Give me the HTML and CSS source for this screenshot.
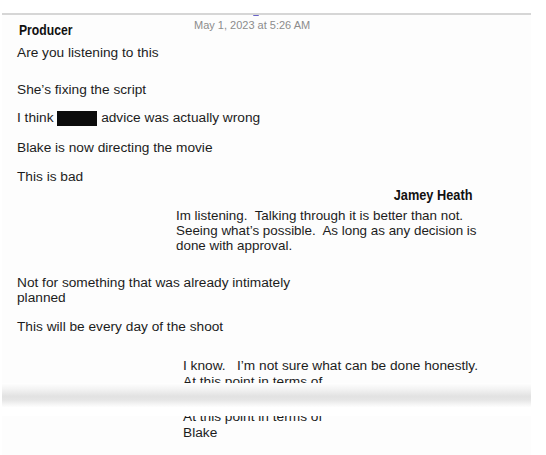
FILE: index.html
```html
<!DOCTYPE html>
<html lang="en">
<head>
    <meta charset="UTF-8">
    <title>Messages</title>
    <link rel="stylesheet" href="styles.css">
</head>
<body>
    <div class="sheet">
        <div class="sheet-top">
            <span class="marker"></span>
            <div class="thread-head">
                <span class="head-name"><span class="sender">Producer</span></span>
                <span class="stamp">May 1, 2023 at 5:26 AM</span>
            </div>
            <p class="msg first">Are you listening to this</p>
            <p class="msg wide-gap">She’s fixing the script</p>
            <p class="msg tight">I think <span class="redacted"></span> advice was actually wrong</p>
            <p class="msg">Blake is now directing the movie</p>
            <p class="msg">This is bad</p>

            <div class="reply">
                <div class="reply-name"><span class="sender">Jamey Heath</span></div>
                <p class="msg reply-text">Im listening.&nbsp; Talking through it is better than not.<br>Seeing what’s possible.&nbsp; As long as any decision is<br>done with approval.</p>
            </div>

            <p class="msg wide-gap">Not for something that was already intimately<br>planned</p>
            <p class="msg">This will be every day of the shoot</p>

            <p class="msg later">I know.&nbsp;&nbsp; I’m not sure what can be done honestly.<br>At this point in terms of</p>
        </div>

        <div class="fold"></div>

        <div class="sheet-bottom">
            <p class="msg later carried">At this point in terms of<br>Blake</p>
        </div>
    </div>
</body>
</html>
```

FILE: styles.css
```css
body {
    margin: 0;
    background-color: #ffffff;
    font-family: 'Liberation Sans', Arial, sans-serif;
    color: #1c1c1c;
}
.sheet {
    width: 529px;
    margin: 13px 0 0 2px;
}
.sheet-top {
    position: relative;
    height: 368px;
    overflow: hidden;
    border-top: 2px solid #d6d6d6;
    background-color: #fdfdfd;
    padding: 0 0 0 15px;
}
.marker {
    position: absolute;
    left: 251px;
    top: -1px;
    width: 6px;
    height: 2px;
    background-color: #6a64c8;
    border-radius: 1px;
}
.thread-head {
    display: flex;
    align-items: flex-start;
    height: 22px;
    padding-top: 6px;
}
.head-name {
    width: 175px;
    padding-left: 2px;
}
.sender {
    display: inline-block;
    font-weight: bold;
    font-size: 14.5px;
    line-height: 18px;
    color: #111111;
    transform: scaleX(0.84);
    transform-origin: left center;
}
.stamp {
    font-size: 11px;
    line-height: 12px;
    color: #8c8c8c;
    margin-top: -2px;
}
.msg {
    margin: 14px 0 0 0;
    font-size: 13.7px;
    line-height: 15px;
}
.msg.first {
    margin-top: 2px;
}
.msg.wide-gap {
    margin-top: 22px;
}
.msg.tight {
    margin-top: 13px;
}
.redacted {
    display: inline-block;
    width: 40px;
    height: 15px;
    background-color: #0c0c0c;
    vertical-align: -4px;
}
.reply {
    margin: 2px 0 0 159px;
    width: 296px;
}
.reply-name {
    text-align: right;
    line-height: 17px;
}
.reply-name .sender {
    transform-origin: right center;
    transform: scaleX(0.88);
}
.reply-text {
    margin-top: 4px;
    font-size: 13.4px;
    white-space: nowrap;
}
.later {
    margin: 24px 0 0 166px;
    line-height: 16px;
    white-space: nowrap;
}
.fold {
    height: 33px;
    background: linear-gradient(to bottom, #ffffff 0%, #f2f2f2 20%, #e2e2e2 40%, #e6e6e6 52%, #f4f4f4 64%, #ffffff 74%);
}
.sheet-bottom {
    height: 40px;
    overflow: hidden;
    background-color: #fdfdfd;
}
.carried {
    margin-top: -7px;
    margin-left: 181px;
}
```
